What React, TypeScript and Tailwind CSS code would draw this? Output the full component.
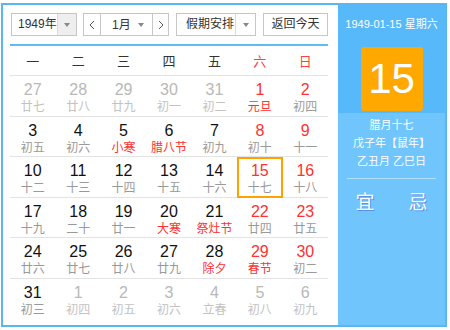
type Day = { d: number; l: string; other?: boolean; fest?: boolean };

const weekNames = ['一', '二', '三', '四', '五', '六', '日'];

const weeks: Day[][] = [
  [
    { d: 27, l: '廿七', other: true },
    { d: 28, l: '廿八', other: true },
    { d: 29, l: '廿九', other: true },
    { d: 30, l: '初一', other: true },
    { d: 31, l: '初二', other: true },
    { d: 1, l: '元旦', fest: true },
    { d: 2, l: '初四' },
  ],
  [
    { d: 3, l: '初五' },
    { d: 4, l: '初六' },
    { d: 5, l: '小寒', fest: true },
    { d: 6, l: '腊八节', fest: true },
    { d: 7, l: '初九' },
    { d: 8, l: '初十' },
    { d: 9, l: '十一' },
  ],
  [
    { d: 10, l: '十二' },
    { d: 11, l: '十三' },
    { d: 12, l: '十四' },
    { d: 13, l: '十五' },
    { d: 14, l: '十六' },
    { d: 15, l: '十七' },
    { d: 16, l: '十八' },
  ],
  [
    { d: 17, l: '十九' },
    { d: 18, l: '二十' },
    { d: 19, l: '廿一' },
    { d: 20, l: '大寒', fest: true },
    { d: 21, l: '祭灶节', fest: true },
    { d: 22, l: '廿四' },
    { d: 23, l: '廿五' },
  ],
  [
    { d: 24, l: '廿六' },
    { d: 25, l: '廿七' },
    { d: 26, l: '廿八' },
    { d: 27, l: '廿九' },
    { d: 28, l: '除夕', fest: true },
    { d: 29, l: '春节', fest: true },
    { d: 30, l: '初二' },
  ],
  [
    { d: 31, l: '初三' },
    { d: 1, l: '初四', other: true },
    { d: 2, l: '初五', other: true },
    { d: 3, l: '初六', other: true },
    { d: 4, l: '立春', other: true },
    { d: 5, l: '初八', other: true },
    { d: 6, l: '初九', other: true },
  ],
];

// 下拉小三角
function Caret() {
  return <span className="w-0 h-0 border-x-[3px] border-x-transparent border-t-[4px] border-t-[#888]" />;
}

function Chevron({ right }: { right?: boolean }) {
  return (
    <svg width="6" height="10" viewBox="0 0 6 10" className="block">
      <path d={right ? 'M1 1 L5 5 L1 9' : 'M5 1 L1 5 L5 9'} fill="none" stroke="#555" strokeWidth="1" />
    </svg>
  );
}

function Toolbar() {
  return (
    <div className="flex items-center h-[23px] ml-px text-[12px] text-[#333]">
      {/* 年份 */}
      <div className="flex w-[66px] h-full border border-[#c6c6c6] bg-white">
        <span className="flex-1 pl-[6px] leading-[21px]">1949年</span>
        <span className="w-[19px] flex items-center justify-center bg-[#eeeeee] border-l border-[#dcdcdc]">
          <Caret />
        </span>
      </div>

      {/* 月份 */}
      <div className="flex h-full ml-[6px]">
        <span className="w-[18px] flex items-center justify-center border border-[#c6c6c6] bg-white">
          <Chevron />
        </span>
        <div className="w-[51px] flex items-center border-y border-[#c6c6c6] bg-white">
          <span className="pl-[11px] flex-1">1月</span>
          <span className="pr-[8px] flex items-center">
            <Caret />
          </span>
        </div>
        <span className="w-[17px] flex items-center justify-center border border-[#c6c6c6] bg-white">
          <Chevron right />
        </span>
      </div>

      {/* 假期 */}
      <div className="flex w-[80px] h-full ml-[7px] border border-[#c6c6c6] bg-white">
        <span className="flex-1 pl-[9px] leading-[21px]">假期安排</span>
        <span className="w-[20px] flex items-center justify-center border-l border-[#dcdcdc]">
          <Caret />
        </span>
      </div>

      <button className="w-[65px] h-full ml-[7px] border border-[#c6c6c6] bg-white text-[12px] text-[#333] leading-[21px]">
        返回今天
      </button>
    </div>
  );
}

function Cell({ day, col, selected }: { day: Day; col: number; selected: boolean }) {
  const num = day.other ? 'text-[#b8b8b8]' : col >= 5 ? 'text-[#ff3131]' : 'text-[#111]';
  const lunar = day.other ? 'text-[#c2c2c2]' : day.fest ? 'text-[#ff3131]' : 'text-[#999]';
  return (
    <div
      className={`flex flex-col items-center pt-[3px] border-2 ${selected ? 'border-[#ffa200]' : 'border-transparent'}`}
    >
      <span className={`text-[16px] leading-[18px] ${num}`}>{day.d}</span>
      <span className={`text-[12px] leading-[16px] ${lunar}`}>{day.l}</span>
    </div>
  );
}

export default function App() {
  return (
    <div className="pl-px pt-[3px] bg-white font-['Liberation_Sans','Noto_Sans_CJK_SC',sans-serif]">
      <div className="w-[446px] h-[324px] border-2 border-[#58b6f5] flex bg-white">
        {/* 左侧日历 */}
        <div className="w-[335px] pl-[7px] pt-[8px]">
          <Toolbar />
          <div className="w-[318px] h-[2px] bg-[#62baf4] mt-[8px]" />

          <div className="w-[318px] grid grid-cols-7 h-[30px] pt-[8px] border-b border-[#e3e3e3] text-[13px] leading-[16px]">
            {weekNames.map((w, i) => (
              <span key={w} className={`text-center ${i >= 5 ? 'text-[#ff4040]' : 'text-[#333]'}`}>
                {w}
              </span>
            ))}
          </div>

          {weeks.map((row, r) => (
            <div
              key={r}
              className={`w-[318px] grid grid-cols-7 h-[40.5px] ${r < 5 ? 'border-b border-[#e3e3e3]' : ''}`}
            >
              {row.map((day, c) => (
                <Cell key={c} day={day} col={c} selected={r === 2 && c === 5} />
              ))}
            </div>
          ))}
        </div>

        {/* 右侧详情 */}
        <div className="flex-1 flex flex-col bg-[#70c5fc] text-white">
          <div className="flex flex-col items-center bg-[#57b9fa] h-[108px] pt-[11px]">
            <span className="text-[11px] leading-[16px]">1949-01-15 星期六</span>
            <div className="mt-[15px] w-[62px] h-[64px] rounded-[3px] bg-[#ffa800] flex items-center justify-center text-[42px] leading-none">
              15
            </div>
          </div>
          <div className="flex flex-col items-center pt-[3px] text-[11px] leading-[18px]">
            <span>腊月十七</span>
            <span>戊子年【鼠年】</span>
            <span>乙丑月 乙巳日</span>
          </div>
          <div className="mx-[9px] mt-[8px] h-px bg-[#b3e0fe]" />
          <div className="mt-[12px] flex justify-center gap-[34px] text-[19px] leading-[24px] [text-shadow:1px_1px_0_#5a8fe6]">
            <span>宜</span>
            <span>忌</span>
          </div>
        </div>
      </div>
    </div>
  );
}
